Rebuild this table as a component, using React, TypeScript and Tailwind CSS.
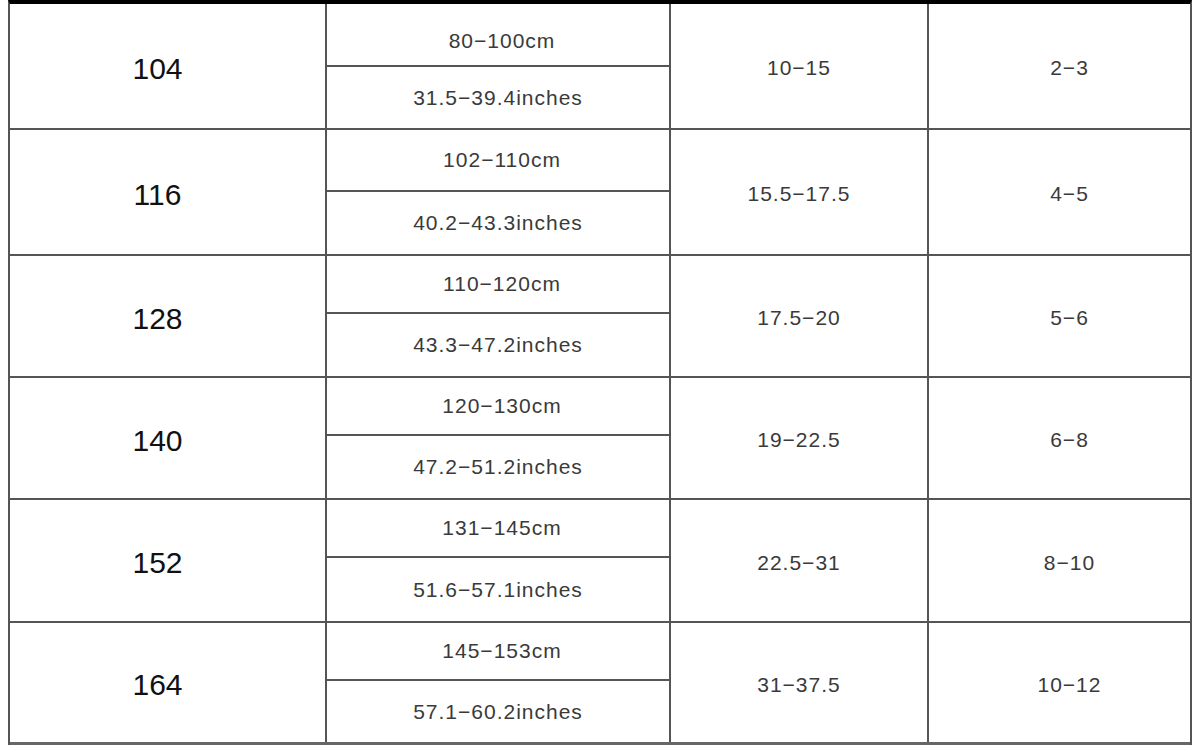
const rows = [
  { size: "104", cm: "80−100cm", inch: "31.5−39.4inches", foot: "10−15", age: "2−3", h: "h-[126px]", top: "h-[63px] pt-[12px]" },
  { size: "116", cm: "102−110cm", inch: "40.2−43.3inches", foot: "15.5−17.5", age: "4−5", h: "h-[126px]", top: "h-[62px]" },
  { size: "128", cm: "110−120cm", inch: "43.3−47.2inches", foot: "17.5−20", age: "5−6", h: "h-[122px]", top: "h-[58px]" },
  { size: "140", cm: "120−130cm", inch: "47.2−51.2inches", foot: "19−22.5", age: "6−8", h: "h-[122px]", top: "h-[58px]" },
  { size: "152", cm: "131−145cm", inch: "51.6−57.1inches", foot: "22.5−31", age: "8−10", h: "h-[123px]", top: "h-[58px]" },
  { size: "164", cm: "145−153cm", inch: "57.1−60.2inches", foot: "31−37.5", age: "10−12", h: "h-[122px]", top: "h-[58px]" },
];

const App = () => {
  return (
    <div className="w-[1200px] h-[752px] bg-white overflow-hidden font-['Liberation_Sans',Arial,sans-serif]">
      <div className="ml-[8px] w-[1184px] border-t-4 border-t-black border-l-2 border-r-2 border-[#555]">
        {rows.map((r, i) => (
          <div
            key={r.size}
            className={`flex ${r.h} ${i === rows.length - 1 ? "border-b-[3px] border-[#666]" : "border-b-2 border-[#555]"}`}>
            {/* size */}
            <div className="w-[317px] shrink-0 border-r-2 border-[#555] flex items-center justify-center pr-5 pt-1 text-[30px] text-[#111]">
              {r.size}
            </div>
            {/* height */}
            <div className="w-[344px] shrink-0 border-r-2 border-[#555] flex flex-col text-[21px] tracking-[1px] text-[#3a3a3a]">
              <div className={`${r.top} shrink-0 border-b-2 border-[#555] flex items-center justify-center pl-2`}>
                {r.cm}
              </div>
              <div className="flex-1 flex items-center justify-center">
                {r.inch}
              </div>
            </div>
            {/* foot */}
            <div className="w-[258px] shrink-0 border-r-2 border-[#555] flex items-center justify-center pt-1 text-[21px] tracking-[1px] text-[#3a3a3a]">
              {r.foot}
            </div>
            {/* age */}
            <div className="flex-1 flex items-center justify-center pl-5 pt-1 text-[21px] tracking-[1px] text-[#3a3a3a]">
              {r.age}
            </div>
          </div>
        ))}
      </div>
    </div>
  );
};

export default App;
